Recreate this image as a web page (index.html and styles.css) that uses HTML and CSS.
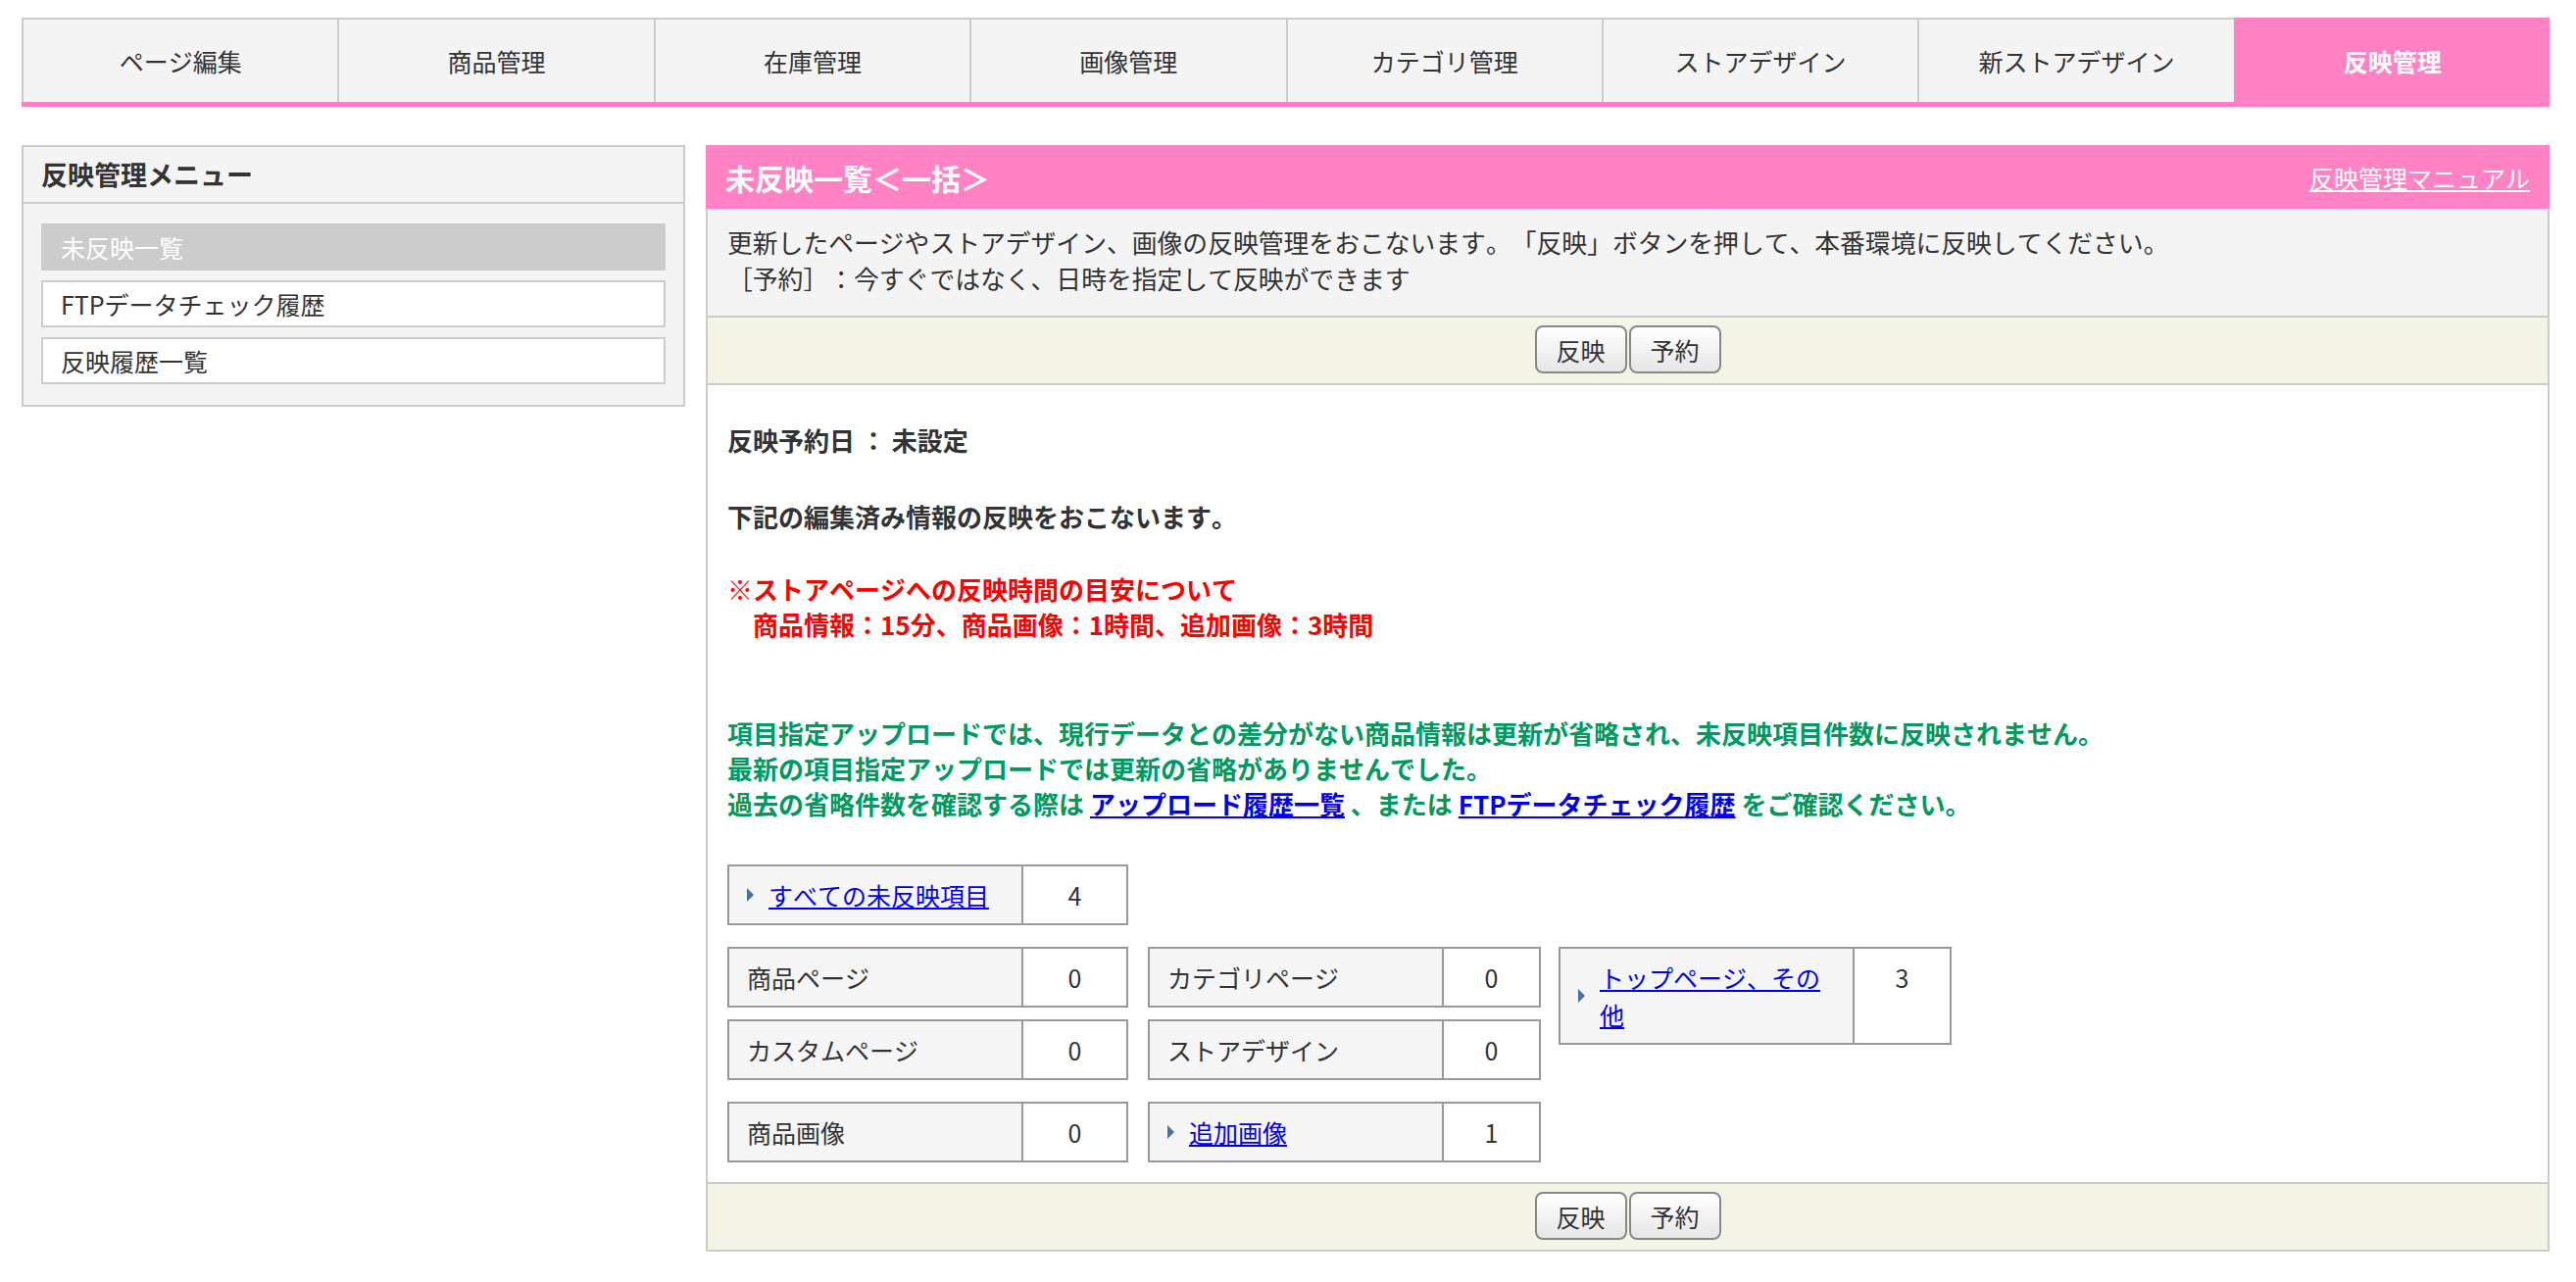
FILE: index.html
```html
<!DOCTYPE html>
<html lang="ja">
<head>
    <meta charset="UTF-8">
    <title>反映管理</title>
    <link rel="stylesheet" href="styles.css">
</head>
<body>
    <div class="page">
        <!-- グローバルナビ -->
        <ul class="tabs">
            <li class="tab">ページ編集</li>
            <li class="tab">商品管理</li>
            <li class="tab">在庫管理</li>
            <li class="tab">画像管理</li>
            <li class="tab">カテゴリ管理</li>
            <li class="tab">ストアデザイン</li>
            <li class="tab">新ストアデザイン</li>
            <li class="tab active">反映管理</li>
        </ul>

        <div class="layout">
            <!-- サイドメニュー -->
            <aside class="side">
                <h2 class="side-title">反映管理メニュー</h2>
                <ul class="side-menu">
                    <li class="side-item current">未反映一覧</li>
                    <li class="side-item">FTPデータチェック履歴</li>
                    <li class="side-item">反映履歴一覧</li>
                </ul>
            </aside>

            <!-- メイン -->
            <main class="main">
                <div class="main-head">
                    <h1 class="main-title">未反映一覧＜一括＞</h1>
                    <a class="manual" href="#">反映管理マニュアル</a>
                </div>
                <div class="main-box">
                    <div class="desc">
                        更新したページやストアデザイン、画像の反映管理をおこないます。「反映」ボタンを押して、本番環境に反映してください。<br>
                        ［予約］：今すぐではなく、日時を指定して反映ができます
                    </div>
                    <div class="btn-bar">
                        <button class="btn">反映</button><button class="btn">予約</button>
                    </div>

                    <div class="content">
                        <p class="strong date">反映予約日 ： 未設定</p>
                        <p class="strong notice">下記の編集済み情報の反映をおこないます。</p>
                        <p class="red">※ストアページへの反映時間の目安について<br>　商品情報：15分、商品画像：1時間、追加画像：3時間</p>
                        <p class="green">
                            項目指定アップロードでは、現行データとの差分がない商品情報は更新が省略され、未反映項目件数に反映されません。<br>
                            最新の項目指定アップロードでは更新の省略がありませんでした。<br>
                            過去の省略件数を確認する際は <a href="#">アップロード履歴一覧</a> 、または <a href="#">FTPデータチェック履歴</a> をご確認ください。
                        </p>

                        <table class="count wide all">
                            <tr>
                                <td class="label"><span class="more"><i class="tri"></i><a href="#">すべての未反映項目</a></span></td>
                                <td class="num">4</td>
                            </tr>
                        </table>

                        <div class="count-row">
                            <div class="count-col">
                                <table class="count wide">
                                    <tr><td class="label">商品ページ</td><td class="num">0</td></tr>
                                </table>
                                <table class="count wide">
                                    <tr><td class="label">カスタムページ</td><td class="num">0</td></tr>
                                </table>
                            </div>
                            <div class="count-col">
                                <table class="count">
                                    <tr><td class="label">カテゴリページ</td><td class="num">0</td></tr>
                                </table>
                                <table class="count">
                                    <tr><td class="label">ストアデザイン</td><td class="num">0</td></tr>
                                </table>
                            </div>
                            <div class="count-col last">
                                <table class="count">
                                    <tr>
                                        <td class="label"><span class="more"><i class="tri"></i><a href="#">トップページ、その他</a></span></td>
                                        <td class="num">3</td>
                                    </tr>
                                </table>
                            </div>
                        </div>

                        <div class="count-row">
                            <div class="count-col">
                                <table class="count wide">
                                    <tr><td class="label">商品画像</td><td class="num">0</td></tr>
                                </table>
                            </div>
                            <div class="count-col">
                                <table class="count">
                                    <tr>
                                        <td class="label"><span class="more"><i class="tri"></i><a href="#">追加画像</a></span></td>
                                        <td class="num">1</td>
                                    </tr>
                                </table>
                            </div>
                        </div>
                    </div>

                    <div class="btn-bar bottom">
                        <button class="btn">反映</button><button class="btn">予約</button>
                    </div>
                </div>
            </main>
        </div>
    </div>
</body>
</html>
```

FILE: styles.css
```css
/* 共通 */
body {
    margin: 0;
    background: #fff;
    color: #333;
    font-family: "Noto Sans CJK JP", "Liberation Sans", sans-serif;
    font-size: 25px;
    font-kerning: none;
    text-spacing-trim: space-all;
}

ul {
    margin: 0;
    padding: 0;
    list-style: none;
}

a {
    color: #0000ee;
}

.page {
    width: 2579px;
    margin-left: 22px;
    padding-top: 18px;
}

/* タブ */
.tabs {
    display: flex;
    border-bottom: 5px solid #ff82c4;
}

.tab {
    flex: 1;
    height: 84px;
    line-height: 84px;
    text-align: center;
    background: #f4f4f4;
    border-top: 2px solid #ccc;
    border-left: 2px solid #ccc;
}

.tab.active {
    background: #ff82c4;
    color: #fff;
    font-weight: bold;
    border-color: #ff82c4;
}

/* レイアウト */
.layout {
    display: flex;
    align-items: flex-start;
    gap: 21px;
    margin-top: 39px;
}

/* サイドメニュー */
.side {
    width: 677px;
    box-sizing: border-box;
    background: #f4f4f4;
    border: 2px solid #ccc;
}

.side-title {
    margin: 0;
    padding: 0 18px;
    height: 56px;
    line-height: 56px;
    font-size: 27px;
    border-bottom: 2px solid #ccc;
}

.side-menu {
    display: flex;
    flex-direction: column;
    gap: 10px;
    padding: 20px 18px 21px;
}

.side-item {
    height: 44px;
    line-height: 44px;
    padding: 0 18px;
    background: #fff;
    border: 2px solid #ccc;
}

.side-item.current {
    background: #ccc;
    color: #fff;
}

/* メイン */
.main {
    flex: 1;
}

.main-head {
    display: flex;
    justify-content: space-between;
    align-items: center;
    height: 65px;
    padding: 0 20px;
    background: #ff82c4;
    color: #fff;
}

.main-title {
    margin: 0;
    font-size: 30px;
}

.manual {
    color: #fff;
    font-size: 25px;
}

.main-box {
    border: 2px solid #ccc;
    border-top: none;
}

.desc {
    padding: 15px 20px 20px;
    font-size: 25.8px;
    line-height: 37px;
    background: #f4f4f4;
    border-bottom: 2px solid #ccc;
}

.btn-bar {
    display: flex;
    justify-content: center;
    gap: 2px;
    padding: 8px 0 10px;
    background: #f4f4e6;
    border-bottom: 2px solid #ccc;
}

.btn-bar.bottom {
    border-top: 2px solid #ccc;
    border-bottom: none;
}

.btn {
    width: 94px;
    height: 49px;
    padding: 0;
    font-family: inherit;
    font-size: 25px;
    color: #333;
    background: linear-gradient(#ffffff, #e6e6e6);
    border: 2px solid #888;
    border-radius: 8px;
}

/* 本文 */
.content {
    padding: 38px 20px 20px;
}

.content p {
    margin: 0;
    font-size: 26px;
    line-height: 36px;
    font-weight: bold;
}

.notice {
    margin-top: 42px !important;
}

.red {
    color: #ff0000;
    margin-top: 38px !important;
}

.green {
    color: #00995e;
    margin-top: 75px !important;
}

.green a {
    color: #0000ee;
}

/* 件数テーブル */
.count {
    width: 401px;
    border-collapse: collapse;
    table-layout: fixed;
}

.count.wide {
    width: 409px;
}

.count td {
    border: 2px solid #999;
    padding: 10px 18px;
    line-height: 38px;
    vertical-align: top;
}

.count .label {
    width: 262px;
    background: #f5f5f5;
}

.count .num {
    text-align: center;
    background: #fff;
}

.count.all {
    margin-top: 44px;
}

.more {
    display: flex;
    align-items: center;
    gap: 15px;
}

.tri {
    flex: none;
    width: 0;
    height: 0;
    border-top: 7px solid transparent;
    border-bottom: 7px solid transparent;
    border-left: 7px solid #4a6fa0;
}

.count-row {
    display: flex;
    align-items: flex-start;
    gap: 20px;
    margin-top: 22px;
}

.count-col {
    display: flex;
    flex-direction: column;
    gap: 12px;
}

.count-col.last {
    margin-left: -2px;
}
```
